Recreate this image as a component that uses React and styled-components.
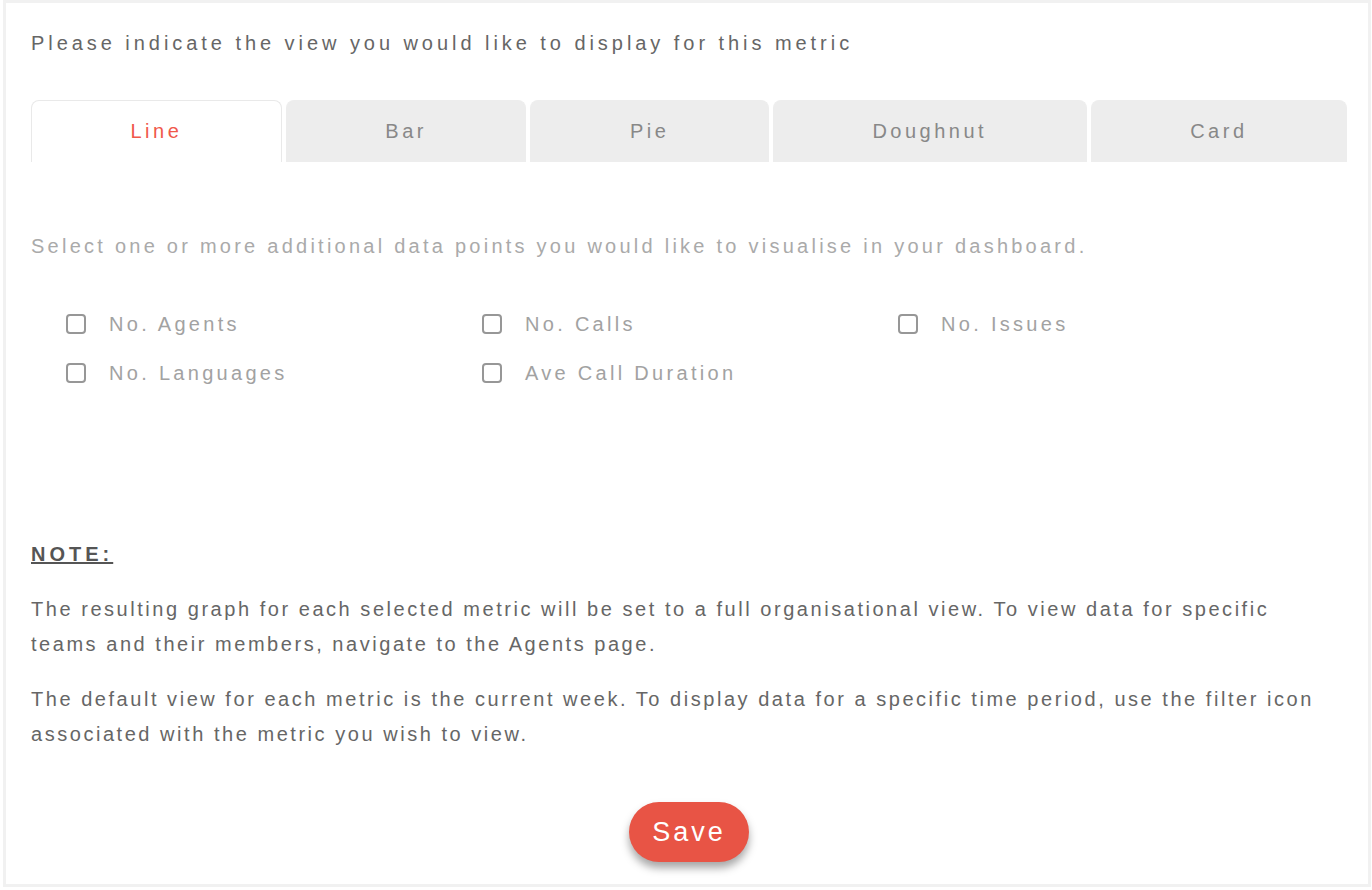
import React, { useState } from "react";
import styled, { createGlobalStyle } from "styled-components";

const Global = createGlobalStyle`
  html, body { margin: 0; padding: 0; background: #ffffff; }
  body { font-family: "Liberation Sans", Arial, sans-serif; }
  * { box-sizing: border-box; }
`;

const Page = styled.div`
  padding: 0 0 0 3px;
  width: 1372px;
  height: 890px;
`;

const Panel = styled.div`
  width: 1368px;
  height: 887px;
  border: 3px solid #f1f1f1;
  background: #fff;
  padding: 29px 21px 0 25px;
  display: flex;
  flex-direction: column;
`;

const Heading = styled.p`
  margin: 0;
  font-size: 20px;
  line-height: 22px;
  letter-spacing: 3.95px;
  color: #666666;
`;

const Tabs = styled.div`
  display: flex;
  gap: 4px;
  margin-top: 46px;
  height: 62px;
`;

const Tab = styled.button`
  flex: 1 1 auto;
  padding: 0;
  border: 1px solid ${(p) => (p.$active ? "#e9e9e9" : "#ededed")};
  border-bottom: none;
  border-radius: 8px 8px 0 0;
  background: ${(p) => (p.$active ? "#ffffff" : "#ededed")};
  color: ${(p) => (p.$active ? "#f0584a" : "#888888")};
  font-family: inherit;
  font-size: 20px;
  letter-spacing: 3.5px;
  cursor: pointer;
`;

const Sub = styled.p`
  margin: 73px 0 0;
  font-size: 20px;
  line-height: 22px;
  letter-spacing: 3.25px;
  color: #aaaaaa;
`;

const Options = styled.div`
  display: grid;
  grid-template-columns: repeat(3, 416px);
  row-gap: 27px;
  margin: 56px 0 0 35px;
`;

const Option = styled.label`
  display: flex;
  align-items: center;
  gap: 23px;
  font-size: 20px;
  line-height: 22px;
  letter-spacing: 3.3px;
  color: #a2a2a2;
  cursor: pointer;
`;

const Box = styled.span`
  width: 20px;
  height: 20px;
  border: 2px solid #979797;
  border-radius: 4px;
  background: ${(p) => (p.$checked ? "#979797" : "#fff")};
  flex: none;
`;

const Note = styled.div`
  margin-top: 159px;
  font-size: 20px;
  font-weight: 700;
  letter-spacing: 4px;
  color: #555555;
  text-decoration: underline;
  line-height: 22px;
`;

const Para = styled.p`
  margin: ${(p) => (p.$first ? "27px" : "20px")} 0 0;
  font-size: 20px;
  line-height: 35px;
  letter-spacing: 2.54px;
  color: #666666;
  padding-right: 20px;
`;

const Footer = styled.div`
  display: flex;
  justify-content: center;
  margin-top: 50px;
`;

const SaveButton = styled.button`
  width: 120px;
  height: 60px;
  border: none;
  border-radius: 30px;
  background: #e85445;
  color: #fff;
  font-family: inherit;
  font-size: 27px;
  letter-spacing: 3px;
  padding: 0 0 0 0;
  box-shadow: 0 6px 8px rgba(0, 0, 0, 0.35);
  cursor: pointer;
`;

const tabs = ["Line", "Bar", "Pie", "Doughnut", "Card"];
const options = ["No. Agents", "No. Calls", "No. Issues", "No. Languages", "Ave Call Duration"];

export default function App() {
  const [active, setActive] = useState("Line");
  const [checked, setChecked] = useState({});
  return (
    <Page>
      <Global />
      <Panel>
        <Heading>Please indicate the view you would like to display for this metric</Heading>
        <Tabs>
          {tabs.map((t) => (
            <Tab key={t} $active={t === active} onClick={() => setActive(t)}>
              {t}
            </Tab>
          ))}
        </Tabs>
        <Sub>Select one or more additional data points you would like to visualise in your dashboard.</Sub>
        <Options>
          {options.map((o) => (
            <Option key={o} onClick={() => setChecked((c) => ({ ...c, [o]: !c[o] }))}>
              <Box $checked={!!checked[o]} />
              {o}
            </Option>
          ))}
        </Options>
        <Note>NOTE:</Note>
        <Para $first>
          The resulting graph for each selected metric will be set to a full organisational view. To view data for specific
          teams and their members, navigate to the Agents page.
        </Para>
        <Para>
          The default view for each metric is the current week. To display data for a specific time period, use the filter icon
          associated with the metric you wish to view.
        </Para>
        <Footer>
          <SaveButton>Save</SaveButton>
        </Footer>
      </Panel>
    </Page>
  );
}
